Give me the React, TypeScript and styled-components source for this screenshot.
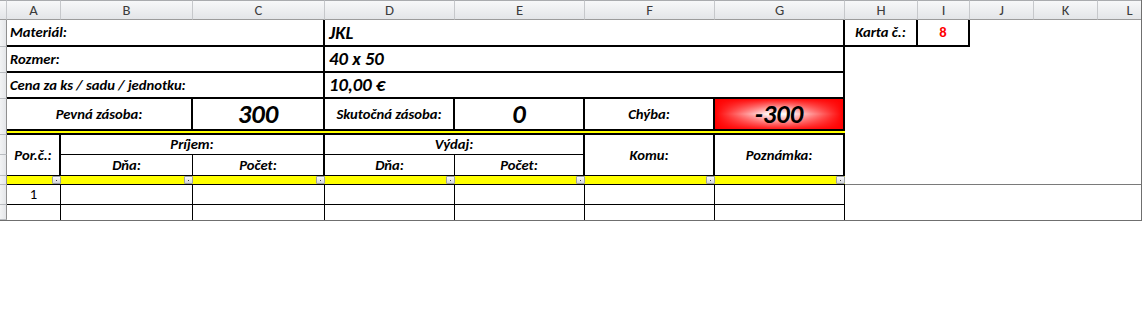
import React from 'react';
import styled, { createGlobalStyle } from 'styled-components';

const GlobalStyle = createGlobalStyle`
  html, body { margin: 0; padding: 0; background: #ffffff; }
  body { font-family: Carlito, Lato, "Liberation Sans", sans-serif; }
`;

const COLS = [7, 54, 132, 132, 130, 130, 130, 130, 73, 52, 64, 64, 64];
const ROWS = [20, 27, 26, 26, 30, 6, 20, 21, 9, 20, 15];
const LETTERS = ['A', 'B', 'C', 'D', 'E', 'F', 'G', 'H', 'I', 'J', 'K', 'L'];

const Frame = styled.div`
  width: 1142px;
  height: 221px;
  box-sizing: border-box;
  border-right: 1px solid #6f6f6f;
  border-bottom: 1px solid #6f6f6f;
  overflow: hidden;
`;

const Sheet = styled.div`
  display: grid;
  grid-template-columns: ${COLS.map((c) => `${c}px`).join(' ')};
  grid-template-rows: ${ROWS.map((r) => `${r}px`).join(' ')};
  width: max-content;
`;

type Edge = 0 | 1 | 2;

interface CellProps {
  $col: number;
  $span?: number;
  $row: number;
  $rspan?: number;
  $r?: Edge;
  $b?: Edge;
  $align?: 'left' | 'center';
}

const Cell = styled.div<CellProps>`
  grid-column: ${(p) => p.$col} / span ${(p) => p.$span ?? 1};
  grid-row: ${(p) => p.$row} / span ${(p) => p.$rspan ?? 1};
  box-sizing: border-box;
  border-style: solid;
  border-color: #000000;
  border-width: 0 ${(p) => p.$r ?? 0}px ${(p) => p.$b ?? 0}px 0;
  display: flex;
  align-items: center;
  justify-content: ${(p) => (p.$align === 'center' ? 'center' : 'flex-start')};
  padding-left: ${(p) => (p.$align === 'center' ? 0 : 3)}px;
  min-width: 0;
  overflow: hidden;
  white-space: nowrap;
  color: #000000;
  line-height: 1;
`;

const Label = styled(Cell)`
  font-size: 14.67px;
  font-weight: 700;
  font-style: italic;
`;

const Value = styled(Cell)`
  font-size: 18.67px;
  font-weight: 700;
  font-style: italic;
  padding-left: 4px;
  padding-top: 1px;
`;

const BigNumber = styled(Cell)<{ $alert?: boolean }>`
  font-size: 26.67px;
  font-weight: 700;
  font-style: italic;
  padding-top: 1px;
  background: ${(p) =>
    p.$alert
      ? `linear-gradient(90deg, rgba(255,0,0,1) 0%, rgba(255,0,0,0) 42%, rgba(255,0,0,0) 58%, rgba(255,0,0,1) 100%),
         linear-gradient(180deg, rgba(255,0,0,0.95) 0%, rgba(255,0,0,0) 50%, rgba(255,0,0,0.9) 100%),
         #ffffff`
      : 'transparent'};
`;

const CardNumber = styled(Cell)`
  font-size: 14.67px;
  font-weight: 700;
  color: #ff0000;
`;

const Plain = styled(Cell)`
  font-size: 14.67px;
`;

const ColHeader = styled.div<{ $col: number }>`
  grid-column: ${(p) => p.$col};
  grid-row: 1;
  box-sizing: border-box;
  border-top: 1px solid #a9abae;
  border-bottom: 1px solid #9b9b9b;
  border-right: 1px solid #c6c8cb;
  background: linear-gradient(#f7f8f9, #e3e5e8);
  display: flex;
  align-items: center;
  justify-content: center;
  font-family: Carlito, Lato, "Liberation Sans", sans-serif;
  font-size: 14.67px;
  line-height: 1;
  color: #3c3c3c;
`;

const RowHeader = styled.div<{ $row: number; $rspan?: number }>`
  grid-column: 1;
  grid-row: ${(p) => p.$row} / span ${(p) => p.$rspan ?? 1};
  box-sizing: border-box;
  border-right: 1px solid #8f8f8f;
  border-bottom: 1px solid #b9bcc0;
  background: linear-gradient(90deg, #f2f3f4, #e4e6e9);
`;

const DoubleRule = styled.div`
  grid-column: 2 / span 7;
  grid-row: 6;
  box-sizing: border-box;
  border-top: 2px solid #000000;
  border-bottom: 2px solid #000000;
  background: #ffff00;
`;

const FilterCell = styled.div<{ $col: number }>`
  grid-column: ${(p) => p.$col};
  grid-row: 9;
  box-sizing: border-box;
  border-bottom: 1px solid #000000;
  background: #ffff00;
  display: flex;
  justify-content: flex-end;
  align-items: stretch;
`;

const FilterButton = styled.span`
  width: 9px;
  box-sizing: border-box;
  border: 1px solid #9c9fa3;
  border-radius: 1px;
  background: linear-gradient(#fbfbfc, #d3d6da);
  display: flex;
  align-items: center;
  justify-content: center;
  &::after {
    content: '';
    width: 1px;
    height: 1px;
    background: #404040;
  }
`;

const FreezeLine = styled.div`
  grid-column: 9 / span 5;
  grid-row: 9;
  border-bottom: 1px solid #7a7a7a;
`;

export default function App() {
  const dataCols = [2, 3, 4, 5, 6, 7, 8];
  return (
    <>
      <GlobalStyle />
      <Frame>
        <Sheet>
          <ColHeader $col={1} />
          {LETTERS.map((l, i) => (
            <ColHeader key={l} $col={i + 2}>
              {l}
            </ColHeader>
          ))}

          <RowHeader $row={2} />
          <RowHeader $row={3} />
          <RowHeader $row={4} />
          <RowHeader $row={5} $rspan={2} />
          <RowHeader $row={7} />
          <RowHeader $row={8} />
          <RowHeader $row={9} />
          <RowHeader $row={10} />
          <RowHeader $row={11} />

          <Label $col={2} $span={3} $row={2} $r={2} $b={2}>Materiál:</Label>
          <Value $col={5} $span={4} $row={2} $r={2} $b={2}>JKL</Value>
          <Label $col={9} $row={2} $r={2} $b={2} $align="center">Karta č.:</Label>
          <CardNumber $col={10} $row={2} $r={2} $b={2} $align="center">8</CardNumber>

          <Label $col={2} $span={3} $row={3} $r={2} $b={2}>Rozmer:</Label>
          <Value $col={5} $span={4} $row={3} $r={2} $b={2}>40 x 50</Value>

          <Label $col={2} $span={3} $row={4} $r={2} $b={2}>Cena za ks / sadu / jednotku:</Label>
          <Value $col={5} $span={4} $row={4} $r={2} $b={2}>10,00 €</Value>

          <Label $col={2} $span={2} $row={5} $r={2} $align="center">Pevná zásoba:</Label>
          <BigNumber $col={4} $row={5} $r={2} $align="center">300</BigNumber>
          <Label $col={5} $row={5} $r={2} $align="center">Skutočná zásoba:</Label>
          <BigNumber $col={6} $row={5} $r={2} $align="center">0</BigNumber>
          <Label $col={7} $row={5} $r={2} $align="center">Chýba:</Label>
          <BigNumber $col={8} $row={5} $r={2} $align="center" $alert>-300</BigNumber>

          <DoubleRule />

          <Label $col={2} $row={7} $rspan={2} $r={2} $b={1} $align="center">Por.č.:</Label>
          <Label $col={3} $span={2} $row={7} $r={2} $b={1} $align="center">Príjem:</Label>
          <Label $col={3} $row={8} $r={1} $b={1} $align="center">Dňa:</Label>
          <Label $col={4} $row={8} $r={2} $b={1} $align="center">Počet:</Label>
          <Label $col={5} $span={2} $row={7} $r={2} $b={1} $align="center">Výdaj:</Label>
          <Label $col={5} $row={8} $r={1} $b={1} $align="center">Dňa:</Label>
          <Label $col={6} $row={8} $r={2} $b={1} $align="center">Počet:</Label>
          <Label $col={7} $row={7} $rspan={2} $r={2} $b={1} $align="center">Komu:</Label>
          <Label $col={8} $row={7} $rspan={2} $r={2} $b={1} $align="center">Poznámka:</Label>

          {dataCols.map((c) => (
            <FilterCell key={`f${c}`} $col={c}>
              <FilterButton />
            </FilterCell>
          ))}
          <FreezeLine />

          {dataCols.map((c) => (
            <Plain key={`r8${c}`} $col={c} $row={10} $r={1} $b={1} $align="center">
              {c === 2 ? '1' : ''}
            </Plain>
          ))}
          {dataCols.map((c) => (
            <Plain key={`r9${c}`} $col={c} $row={11} $r={1} $align="center" />
          ))}
        </Sheet>
      </Frame>
    </>
  );
}
